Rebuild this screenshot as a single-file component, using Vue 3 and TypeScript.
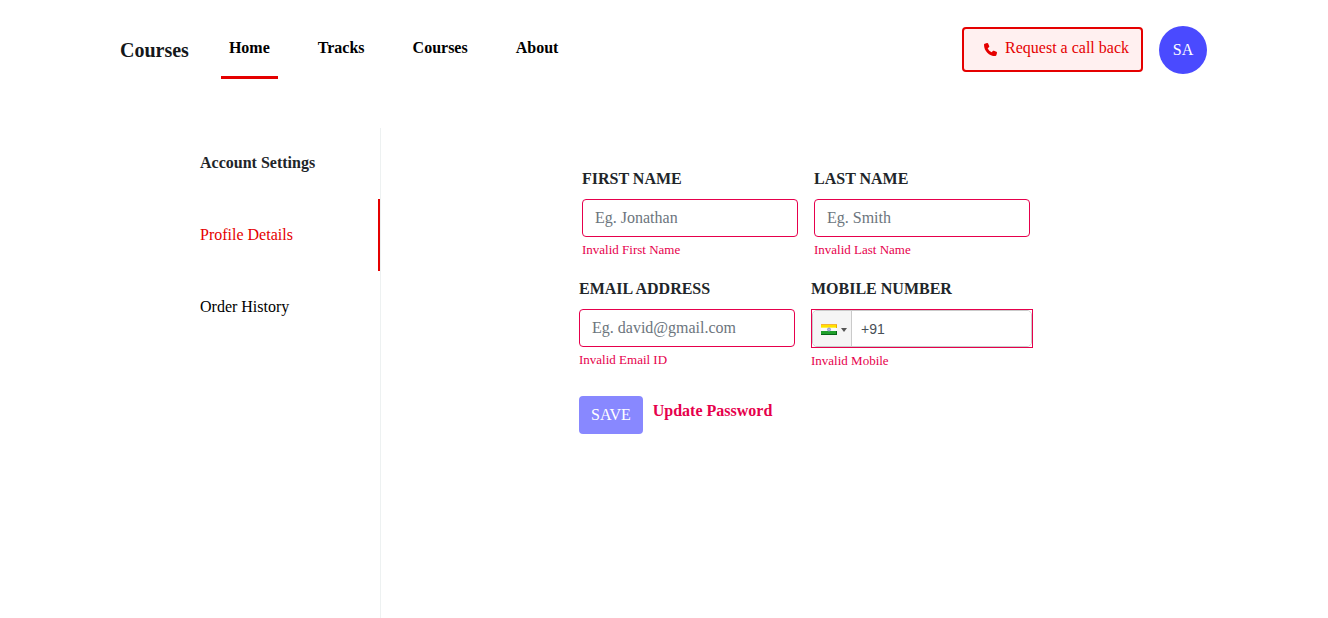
<script setup lang="ts">
import { ref } from 'vue'

interface Field {
  id: string
  label: string
  type: string
  placeholder: string
  error: string
}

const navLinks: string[] = ['Home', 'Tracks', 'Courses', 'About']
const activeLink = ref('Home')

const nameFields: Field[] = [
  { id: 'first-name', label: 'FIRST NAME', type: 'text', placeholder: 'Eg. Jonathan', error: 'Invalid First Name' },
  { id: 'last-name', label: 'LAST NAME', type: 'text', placeholder: 'Eg. Smith', error: 'Invalid Last Name' },
]
const values = ref<Record<string, string>>({ 'first-name': '', 'last-name': '' })
const email = ref('')
const mobile = ref('+91')
</script>

<template>
  <div class="page">
    <header class="header">
      <a class="brand" href="#">Courses</a>
      <nav class="nav">
        <a
          v-for="link in navLinks"
          :key="link"
          href="#"
          class="nav-link"
          :class="{ active: link === activeLink }"
          @click.prevent="activeLink = link"
        >{{ link }}</a>
      </nav>
      <button type="button" class="callback">
        <svg class="phone" viewBox="0 0 512 512" aria-hidden="true">
          <path
            d="M164.900 24.600c-7.700-18.600-28-28.500-47.400-23.200l-88 24C12.100 30.200 0 46 0 64c0 247.400 200.600 448 448 448 18 0 33.800-12.100 38.600-29.500l24-88c5.300-19.400-4.600-39.700-23.200-47.400l-96-40c-16.300-6.800-35.200-2.100-46.300 11.600L304.700 368C234.300 334.700 177.300 277.700 144 207.300l49.300-40.300c13.700-11.200 18.400-30 11.600-46.300l-40-96z"
            fill="currentColor"
          />
        </svg>
        <span>Request a call back</span>
      </button>
      <button type="button" class="avatar">SA</button>
    </header>

    <div class="body">
      <aside class="sidebar">
        <h2 class="side-item side-title">Account Settings</h2>
        <a href="#" class="side-item side-active">Profile Details</a>
        <a href="#" class="side-item">Order History</a>
      </aside>

      <main class="content">
        <form class="form" novalidate @submit.prevent>
          <div class="row">
            <div v-for="f in nameFields" :key="f.id" class="field">
              <label class="label" :for="f.id">{{ f.label }}</label>
              <input :id="f.id" v-model="values[f.id]" class="input" :type="f.type" :placeholder="f.placeholder" />
              <span class="error">{{ f.error }}</span>
            </div>
          </div>
          <div class="row">
            <div class="field">
              <label class="label" for="email">EMAIL ADDRESS</label>
              <input id="email" v-model="email" class="input" type="email" placeholder="Eg. david@gmail.com" />
              <span class="error">Invalid Email ID</span>
            </div>
            <div class="field">
              <label class="label" for="mobile">MOBILE NUMBER</label>
              <div class="phone-box">
                <div class="phone-inner">
                  <button type="button" class="country" aria-label="India: +91">
                    <svg class="flag" viewBox="0 0 16 11" aria-hidden="true">
                      <rect width="16" height="4" fill="#ffe100" />
                      <rect width="16" height="1" fill="#f9b233" />
                      <rect y="3" width="16" height="1" fill="#fff04a" />
                      <rect y="4" width="16" height="3" fill="#fafafd" />
                      <rect y="7" width="16" height="4" fill="#1fa02c" />
                      <rect y="10" width="16" height="1" fill="#08651a" />
                      <rect x="15" y="1" width="1" height="3" fill="#e8b100" />
                      <rect x="15" y="7" width="1" height="4" fill="#08651a" />
                      <circle cx="8" cy="5.500" r="1.500" fill="#b9bce6" stroke="#9094d2" stroke-width="1" />
                    </svg>
                    <span class="arrow"></span>
                  </button>
                  <input id="mobile" v-model="mobile" class="tel" type="tel" />
                </div>
              </div>
              <span class="error">Invalid Mobile</span>
            </div>
          </div>
          <div class="actions">
            <button type="submit" class="save" disabled>SAVE</button>
            <a href="#" class="update">Update Password</a>
          </div>
        </form>
      </main>
    </div>
  </div>
</template>

<style>
body {
  margin: 0;
  background: #fff;
}
</style>

<style scoped>
.page,
.page * {
  box-sizing: border-box;
}
.page {
  display: flex;
  flex-direction: column;
  min-height: 100vh;
  font-family: 'Liberation Serif', 'Times New Roman', serif;
  font-size: 16px;
  line-height: 24px;
  color: #212529;
}
button,
input {
  font-family: inherit;
  font-size: 16px;
  line-height: 24px;
}
button {
  cursor: pointer;
}
a {
  color: inherit;
  text-decoration: none;
}
.header {
  display: flex;
  align-items: center;
  height: 100px;
  padding: 0 121px 0 120px;
}
.brand {
  margin-right: 32px;
  font-size: 20px;
  font-weight: 700;
  color: #14171a;
}
.nav {
  display: flex;
  gap: 32px;
  margin: 0 auto 1px 0;
}
.nav-link {
  padding: 16px 8px;
  border-bottom: 3px solid transparent;
  font-weight: 700;
  color: #000;
}
.nav-link.active {
  border-bottom-color: #e50000;
}
.callback {
  display: flex;
  align-items: center;
  gap: 8px;
  height: 45px;
  margin: 0 16px 1px 0;
  padding: 0 12px 3px 20px;
  border: 2px solid #e50000;
  border-radius: 4px;
  background: #fff0f0;
  color: #e50000;
}
.phone {
  width: 13px;
  height: 13px;
  margin-top: 3px;
}
.avatar {
  width: 48px;
  height: 48px;
  padding: 0;
  border: 0;
  border-radius: 50%;
  background: #4a4aff;
  color: #fff;
}
.body {
  display: flex;
  flex: 1;
  margin-top: 28px;
}
.sidebar {
  flex: none;
  width: 261px;
  margin-left: 120px;
  border-right: 1px solid #edf1f1;
}
.side-item {
  display: block;
  margin: 0;
  padding: 24px 0 24px 80px;
  color: #000;
}
.side-title {
  padding-top: 23px;
  font-size: 16px;
  font-weight: 700;
  color: #212529;
}
.side-active {
  border-right: 2px solid #e50000;
  color: #e50000;
}
.content {
  display: flex;
  flex: 1;
  justify-content: center;
  padding: 39px 120px 0 23px;
}
.row {
  display: flex;
  justify-content: center;
  gap: 16px;
  margin-bottom: 16px;
}
.field {
  display: flex;
  flex-direction: column;
}
.label {
  margin-bottom: 8px;
  font-weight: 700;
}
.input {
  width: 216px;
  height: 38px;
  padding: 6px 12px;
  border: 1px solid #e6004c;
  border-radius: 4px;
  background: #fff;
  color: #495057;
}
.input::placeholder {
  color: #6c757d;
  opacity: 1;
}
.error {
  margin: 3px 0 2px;
  font-size: 13px;
  line-height: 19px;
  color: #e6004c;
}
.phone-box {
  width: 222px;
  border: 1px solid #e6004c;
}
.phone-inner {
  display: flex;
  height: 37px;
  border: 1px solid #cacaca;
  border-radius: 5px;
  overflow: hidden;
}
.country {
  display: flex;
  flex: none;
  align-items: center;
  gap: 4px;
  width: 39px;
  padding: 2px 0 0 8px;
  border: 0;
  border-right: 1px solid #cacaca;
  background: #f5f5f5;
}
.flag {
  width: 16px;
  height: 11px;
}
.arrow {
  border-top: 4px solid #555;
  border-left: 3px solid transparent;
  border-right: 3px solid transparent;
}
.tel {
  flex: 1;
  min-width: 0;
  padding: 0 9px;
  border: 0;
  font-family: 'Liberation Sans', Arial, sans-serif;
  font-size: 14px;
  color: #495057;
}
.actions {
  display: flex;
  align-items: flex-start;
  gap: 9px;
  padding-top: 8px;
}
.save {
  height: 38px;
  padding: 0 12px;
  border: 0;
  border-radius: 4px;
  background: #8888ff;
  color: #fff;
  cursor: default;
}
.update {
  margin: 3px 0 0 1px;
  font-weight: 700;
  color: #e6004c;
}
</style>
